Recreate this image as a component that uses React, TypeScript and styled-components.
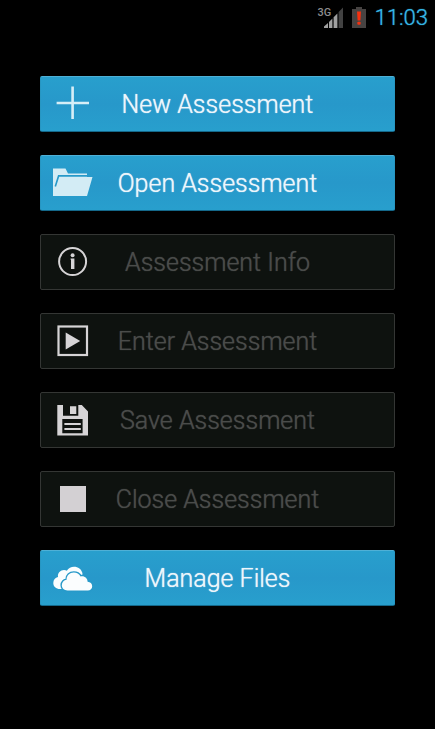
import React from 'react';
import styled, { createGlobalStyle, css } from 'styled-components';

const GlobalStyle = createGlobalStyle`
  *, *::before, *::after { box-sizing: border-box; }
  html, body { margin: 0; background: #000; }
  body { font-family: Roboto, "Noto Sans", sans-serif; }
`;

const Screen = styled.div`
  display: flex;
  flex-direction: column;
  min-height: 100vh;
  background: #000;
`;

const StatusBar = styled.header`
  display: flex;
  align-items: center;
  justify-content: flex-end;
  gap: 9px;
  height: 36px;
  padding: 0 7px;
`;

const Signal = styled.div`
  position: relative;
  display: flex;
  width: 25px;
  height: 22px;
`;

const NetworkType = styled.span`
  position: absolute;
  top: 0;
  left: 0;
  color: #8c8c8c;
  font-size: 11px;
  font-weight: 500;
  line-height: 11px;
`;

const Clock = styled.time`
  color: #33b5e5;
  font-size: 22px;
  font-weight: 300;
  line-height: 26px;
  text-shadow: 0 0 1px currentColor;
`;

const Menu = styled.main`
  display: flex;
  flex-direction: column;
  gap: 23px;
  padding: 40px 40px 24px;
`;

const enabledLook = css`
  color: #eef6fb;
  background: linear-gradient(#289fcd, #2798ca 50%, #289fcd);
  border-color: #4fb0d6 #2796c2 #14688a;
`;

const disabledLook = css`
  color: #4a4c4a;
  background: #0e120f;
  border-color: #343634;
`;

const MenuButton = styled.button`
  display: grid;
  grid-template-columns: 41px 1fr 41px;
  align-items: center;
  width: 100%;
  height: 56px;
  padding: 0 11px;
  border: 1px solid;
  border-radius: 2px;
  font-family: inherit;
  font-size: 25px;
  font-weight: 300;
  line-height: 30px;
  ${(p) => (p.disabled ? disabledLook : enabledLook)}
`;

const Label = styled.span`
  padding-top: 2px;
  text-align: center;
  white-space: nowrap;
  text-shadow: 0 0 1px currentColor;
`;

const Glyph = styled.svg.attrs({
  width: 41,
  height: 42,
  viewBox: '0 0 41 42',
  'aria-hidden': true,
})`
  display: block;
`;

const PlusIcon = () => (
  <Glyph fill="none" stroke="#d6eef7" strokeWidth="2.6">
    <path d="M20.6 3.6V36M4.6 20H37" />
  </Glyph>
);

const FolderIcon = () => (
  <Glyph fill="#d3ecf5">
    <path d="M1 6.5H13.5L16 11.5H35V15H40.5L35 34H1Z" />
    <path d="M35.5 13.9H6.6L3.3 24.5" fill="none" stroke="#2799c9" strokeWidth="1.6" />
  </Glyph>
);

const InfoIcon = () => (
  <Glyph fill="#d6d4d6">
    <circle cx="20.6" cy="20.6" r="13.5" fill="none" stroke="#d6d4d6" strokeWidth="2" />
    <circle cx="20.6" cy="14.2" r="2" />
    <path d="M18.6 17.6H22.4V28H19V18.8H18.6Z" />
  </Glyph>
);

const PlayIcon = () => (
  <Glyph fill="#d6d4d6">
    <rect x="6.5" y="6.5" width="28.5" height="28.5" fill="none" stroke="#d6d4d6" strokeWidth="2.2" />
    <path d="M13.7 12.4V29.6L28.2 21Z" />
  </Glyph>
);

const SaveIcon = () => (
  <Glyph fill="#d6d4d6">
    <path
      fillRule="evenodd"
      d="M5.3 6H11V16.8H26.3V6H29.8L36 12.5V36.5H5.3ZM10.3 20V34.2H30.6V20Z"
    />
    <path d="M18 7.2H24.3V15H18ZM12.4 24H28.8V26H12.4ZM12.4 29H28.8V31H12.4Z" />
  </Glyph>
);

const StopIcon = () => (
  <Glyph fill="#d3d0d3">
    <rect x="8" y="8" width="26" height="26" />
  </Glyph>
);

const CloudsIcon = () => (
  <Glyph fill="#fbfdfe">
    <path d="M8 32C4 32 1.3 29.5 1.3 26C1.3 22.8 3.3 20.6 6 20C5.4 16 8.5 13 12 13C13.2 13 14 13.2 14.8 13.7C16.5 11 19.2 9.7 22 9.7C26.2 9.7 29.4 12 30.4 16V26H10V32Z" />
    <path
      d="M15.5 33.4C12.2 33.4 9.8 31 9.8 28.2C9.8 25.2 12 23.1 14.6 22.7C14.6 18.6 17.7 15.6 21.8 15.6C24.8 15.6 27.2 17 28.6 19.4C32.2 18.4 35.6 21 35.6 24.8C38.4 24.9 40.2 26.7 40.2 29.2C40.2 31.6 38.4 33.4 35.8 33.4Z"
      stroke="#2799c9"
      strokeWidth="2.8"
      paintOrder="stroke"
    />
  </Glyph>
);

const SignalBars = () => (
  <svg width="25" height="22" viewBox="0 0 25 22" aria-hidden="true">
    <path d="M6 21V19.5L10 16V21Z" fill="#a0a0a0" />
    <path d="M11 21V15L14.4 11.5V21Z" fill="#a0a0a0" />
    <path d="M15.6 21V10.3L19.4 6.5V21Z" fill="#a0a0a0" />
    <path d="M20.6 21V5.1L25 0.5V21Z" fill="#424242" />
  </svg>
);

const Battery = () => (
  <svg width="14" height="22" viewBox="0 0 14 22" role="img" aria-label="Battery low">
    <path d="M4 0H10V2H14V21H0V2H4Z" fill="#474342" />
    <path d="M5 4.5H9L8.4 13.5H5.6Z" fill="#f5300f" />
    <rect x="5.3" y="14.8" width="3.4" height="3" rx="1" fill="#f5300f" />
  </svg>
);

const actions = [
  { label: 'New Assessment', Icon: PlusIcon, enabled: true },
  { label: 'Open Assessment', Icon: FolderIcon, enabled: true },
  { label: 'Assessment Info', Icon: InfoIcon, enabled: false },
  { label: 'Enter Assessment', Icon: PlayIcon, enabled: false },
  { label: 'Save Assessment', Icon: SaveIcon, enabled: false },
  { label: 'Close Assessment', Icon: StopIcon, enabled: false },
  { label: 'Manage Files', Icon: CloudsIcon, enabled: true },
];

export default function App() {
  return (
    <Screen>
      <GlobalStyle />
      <StatusBar>
        <Signal>
          <SignalBars />
          <NetworkType>3G</NetworkType>
        </Signal>
        <Battery />
        <Clock>11:03</Clock>
      </StatusBar>
      <Menu>
        {actions.map(({ label, Icon, enabled }) => (
          <MenuButton key={label} type="button" disabled={!enabled}>
            <Icon />
            <Label>{label}</Label>
          </MenuButton>
        ))}
      </Menu>
    </Screen>
  );
}
